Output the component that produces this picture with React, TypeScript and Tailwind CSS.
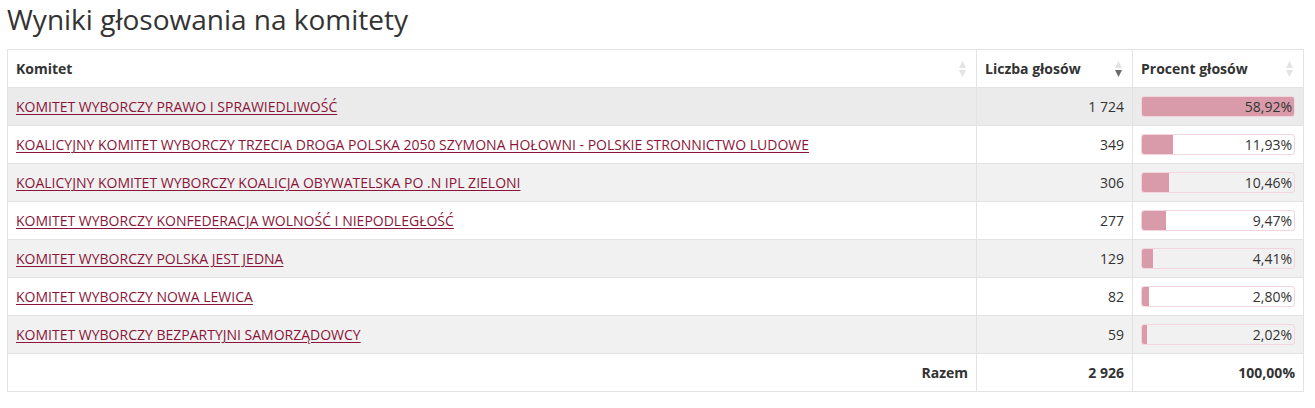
import React from "react";

const rows = [
  { name: "KOMITET WYBORCZY PRAWO I SPRAWIEDLIWOŚĆ", votes: "1 724", pct: "58,92%", p: 58.92 },
  { name: "KOALICYJNY KOMITET WYBORCZY TRZECIA DROGA POLSKA 2050 SZYMONA HOŁOWNI - POLSKIE STRONNICTWO LUDOWE", votes: "349", pct: "11,93%", p: 11.93 },
  { name: "KOALICYJNY KOMITET WYBORCZY KOALICJA OBYWATELSKA PO .N IPL ZIELONI", votes: "306", pct: "10,46%", p: 10.46 },
  { name: "KOMITET WYBORCZY KONFEDERACJA WOLNOŚĆ I NIEPODLEGŁOŚĆ", votes: "277", pct: "9,47%", p: 9.47 },
  { name: "KOMITET WYBORCZY POLSKA JEST JEDNA", votes: "129", pct: "4,41%", p: 4.41 },
  { name: "KOMITET WYBORCZY NOWA LEWICA", votes: "82", pct: "2,80%", p: 2.8 },
  { name: "KOMITET WYBORCZY BEZPARTYJNI SAMORZĄDOWCY", votes: "59", pct: "2,02%", p: 2.02 },
];

const maxP = 58.92;

function SortIcon({ active }: { active?: boolean }) {
  return (
    <svg width="9" height="18" viewBox="0 0 9 18" className="absolute right-[9px] top-1/2 -translate-y-1/2">
      <polygon points="4.5,1 8,8 1,8" fill="#e3e3e3" />
      <polygon points="1,10 8,10 4.5,17" fill={active ? "#6b6b6b" : "#e3e3e3"} />
    </svg>
  );
}

export default function App() {
  return (
    <div className="bg-white w-[1315px] h-[408px] text-[#333]" style={{ fontFamily: '"Open Sans", "Liberation Sans", sans-serif' }}>
      <h1 className="pl-[7px] text-[28px] leading-[38px] font-normal text-[#333] pt-0">Wyniki głosowania na komitety</h1>
      <div className="pl-[7px] pt-[11px]">
        <table className="w-[1296px] border-collapse text-[14px] table-fixed">
          <colgroup>
            <col className="w-[969px]" />
            <col className="w-[156px]" />
            <col className="w-[171px]" />
          </colgroup>
          <thead>
            <tr className="h-[38px]">
              <th className="relative border border-[#e3e3e3] px-2 text-left font-bold">Komitet<SortIcon /></th>
              <th className="relative border border-[#e3e3e3] px-2 text-left font-bold">Liczba głosów<SortIcon active /></th>
              <th className="relative border border-[#e3e3e3] px-2 text-left font-bold">Procent głosów<SortIcon /></th>
            </tr>
          </thead>
          <tbody>
            {rows.map((r, i) => (
              <tr key={i} className={"h-[38px] " + (i === 0 ? "bg-[#ebebeb]" : i % 2 === 0 ? "bg-[#f1f1f1]" : "bg-white")}>
                <td className="border border-[#e3e3e3] px-2">
                  <a href="#" className="text-[#8a1538] underline underline-offset-[2px]">{r.name}</a>
                </td>
                <td className="border border-[#e3e3e3] px-2 text-right">{r.votes}</td>
                <td className="border border-[#e3e3e3] px-2">
                  <div className="relative h-[21px] rounded-[3px] border border-[#f2d5dd] overflow-hidden">
                    <div className="absolute left-0 top-0 bottom-0 bg-[#d99ba9]" style={{ width: `${(r.p / maxP) * 100}%` }} />
                    <div className="relative text-right pr-[2px] leading-[19px]">{r.pct}</div>
                  </div>
                </td>
              </tr>
            ))}
            <tr className="h-[38px] bg-white font-bold">
              <td className="border border-[#e3e3e3] px-2 text-right">Razem</td>
              <td className="border border-[#e3e3e3] px-2 text-right">2 926</td>
              <td className="border border-[#e3e3e3] px-2 text-right">100,00%</td>
            </tr>
          </tbody>
        </table>
      </div>
    </div>
  );
}
